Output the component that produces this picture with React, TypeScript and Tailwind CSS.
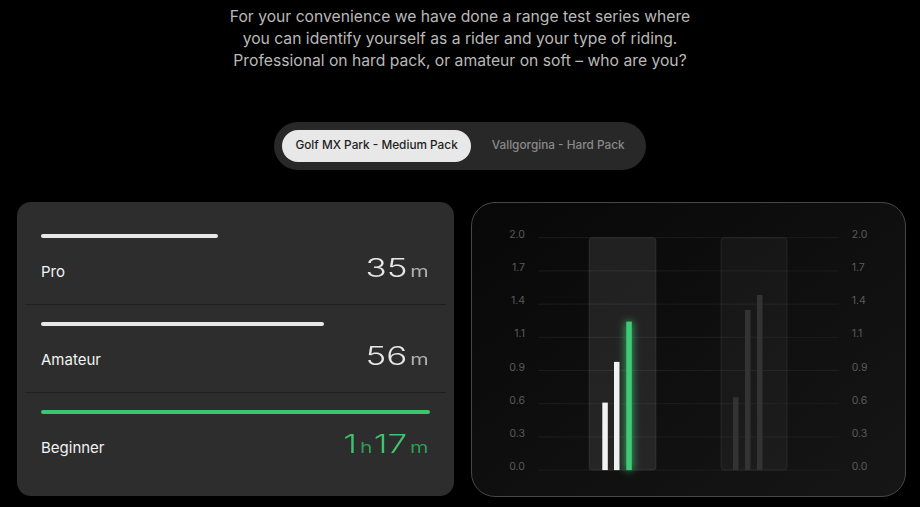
import React from "react";

const rows = [
  { label: "Pro", minutes: 35, parts: [["35", "m"]], active: false },
  { label: "Amateur", minutes: 56, parts: [["56", "m"]], active: false },
  { label: "Beginner", minutes: 77, parts: [["1", "h"], ["17", "m"]], active: true },
];

const ticks = ["2.0", "1.7", "1.4", "1.1", "0.9", "0.6", "0.3", "0.0"];

function Chart() {
  const top = 34.7;
  const step = 33.2;
  const base = top + step * 7;
  const bars = [
    { x: 130.3, h: 67.5, fill: "#f2f2f2" },
    { x: 142, h: 108.2, fill: "#f2f2f2" },
    { x: 154.3, h: 148.5, fill: "#3ccb74", glow: true },
    { x: 261, h: 72.9, fill: "#333333" },
    { x: 273, h: 160.2, fill: "#333333" },
    { x: 285, h: 175.2, fill: "#333333" },
  ];
  return (
    <svg viewBox="0 0 433 293" className="block w-full h-full">
      <defs>
        <filter id="glow" x="-300%" y="-20%" width="700%" height="140%">
          <feGaussianBlur stdDeviation="4" result="b" />
          <feMerge>
            <feMergeNode in="b" />
            <feMergeNode in="SourceGraphic" />
          </feMerge>
        </filter>
      </defs>
      {ticks.map((t, i) => {
        const y = top + step * i;
        return (
          <g key={t}>
            <line x1={66.3} x2={366.7} y1={y} y2={y} stroke="#1d1d1d" strokeWidth={1} />
            <text x={53} y={y} textAnchor="end" fontSize={10.5} fill="#5a5a5a" fontFamily="Inter, sans-serif">
              {t}
            </text>
            <text x={379.7} y={y} fontSize={10.5} fill="#5a5a5a" fontFamily="Inter, sans-serif">
              {t}
            </text>
          </g>
        );
      })}
      <rect x={117} y={top} width={67} height={base - top} rx={3} fill="rgba(255,255,255,0.09)" stroke="rgba(255,255,255,0.08)" />
      <rect x={249} y={top} width={66} height={base - top} rx={3} fill="rgba(255,255,255,0.04)" stroke="rgba(255,255,255,0.07)" />
      {bars.map((b, i) => (
        <rect
          key={i}
          x={b.x}
          y={base - b.h}
          width={5.5}
          height={b.h}
          fill={b.fill}
          filter={b.glow ? "url(#glow)" : undefined}
        />
      ))}
    </svg>
  );
}

export default function App() {
  return (
    <div className="min-h-screen bg-black font-['Inter',sans-serif] pt-[6px]">
      <p className="text-center text-[15.7px] leading-[22px] text-[#b9b9b9]">
        For your convenience we have done a range test series where
        <br />
        you can identify yourself as a rider and your type of riding.
        <br />
        Professional on hard pack, or amateur on soft – who are you?
      </p>

      <div className="mt-[50px] flex justify-center">
        <div className="flex items-center gap-2 rounded-full bg-[#282828] p-2">
          <button className="h-8 rounded-full bg-[#e8e8e8] px-[13px] text-[11.8px] font-medium text-[#1e1e1e]">
            Golf MX Park - Medium Pack
          </button>
          <button className="h-8 rounded-full px-[13px] text-[11.8px] font-medium text-[#8a8a8a]">
            Vallgorgina - Hard Pack
          </button>
        </div>
      </div>

      <div className="mt-8 grid grid-cols-[437px_435px] gap-[17px] pl-[17px]">
        <div className="h-[294px] rounded-[14px] bg-[#2d2d2d] px-2 py-[15px]">
          {rows.map((r, i) => (
            <div
              key={r.label}
              className={`px-4 pt-[17px] ${i < 2 ? "border-b border-[#1f1f1f] pb-[24px]" : "pb-[25px]"}`}
            >
              <div className="h-1 rounded-full" style={{ width: `${(r.minutes / 77) * 100}%`, background: r.active ? "#3cc46e" : "#e8e8e8" }} />
              <div className="mt-[18px] flex h-6 items-baseline justify-between">
                <span className="text-[15px] text-[#f2f2f2]">{r.label}</span>
                <span className={`inline-flex items-baseline origin-right scale-x-[1.4] ${r.active ? "text-[#3cc46e]" : "text-[#e6e6e6]"}`}>
                  {r.parts.map(([n, u]) => (
                    <React.Fragment key={n + u}>
                      <span className="text-[25px] font-light leading-6">{n}</span>
                      <span className={`ml-[2px] mr-[1px] text-[15px] ${r.active ? "text-[#2f9e5a]" : "text-[#b0b0b0]"}`}>{u}</span>
                    </React.Fragment>
                  ))}
                </span>
              </div>
            </div>
          ))}
        </div>

        <div className="h-[295px] rounded-[24px] border border-[#474747] bg-linear-to-br from-[#080808] to-[#161616] overflow-hidden">
          <Chart />
        </div>
      </div>
    </div>
  );
}
